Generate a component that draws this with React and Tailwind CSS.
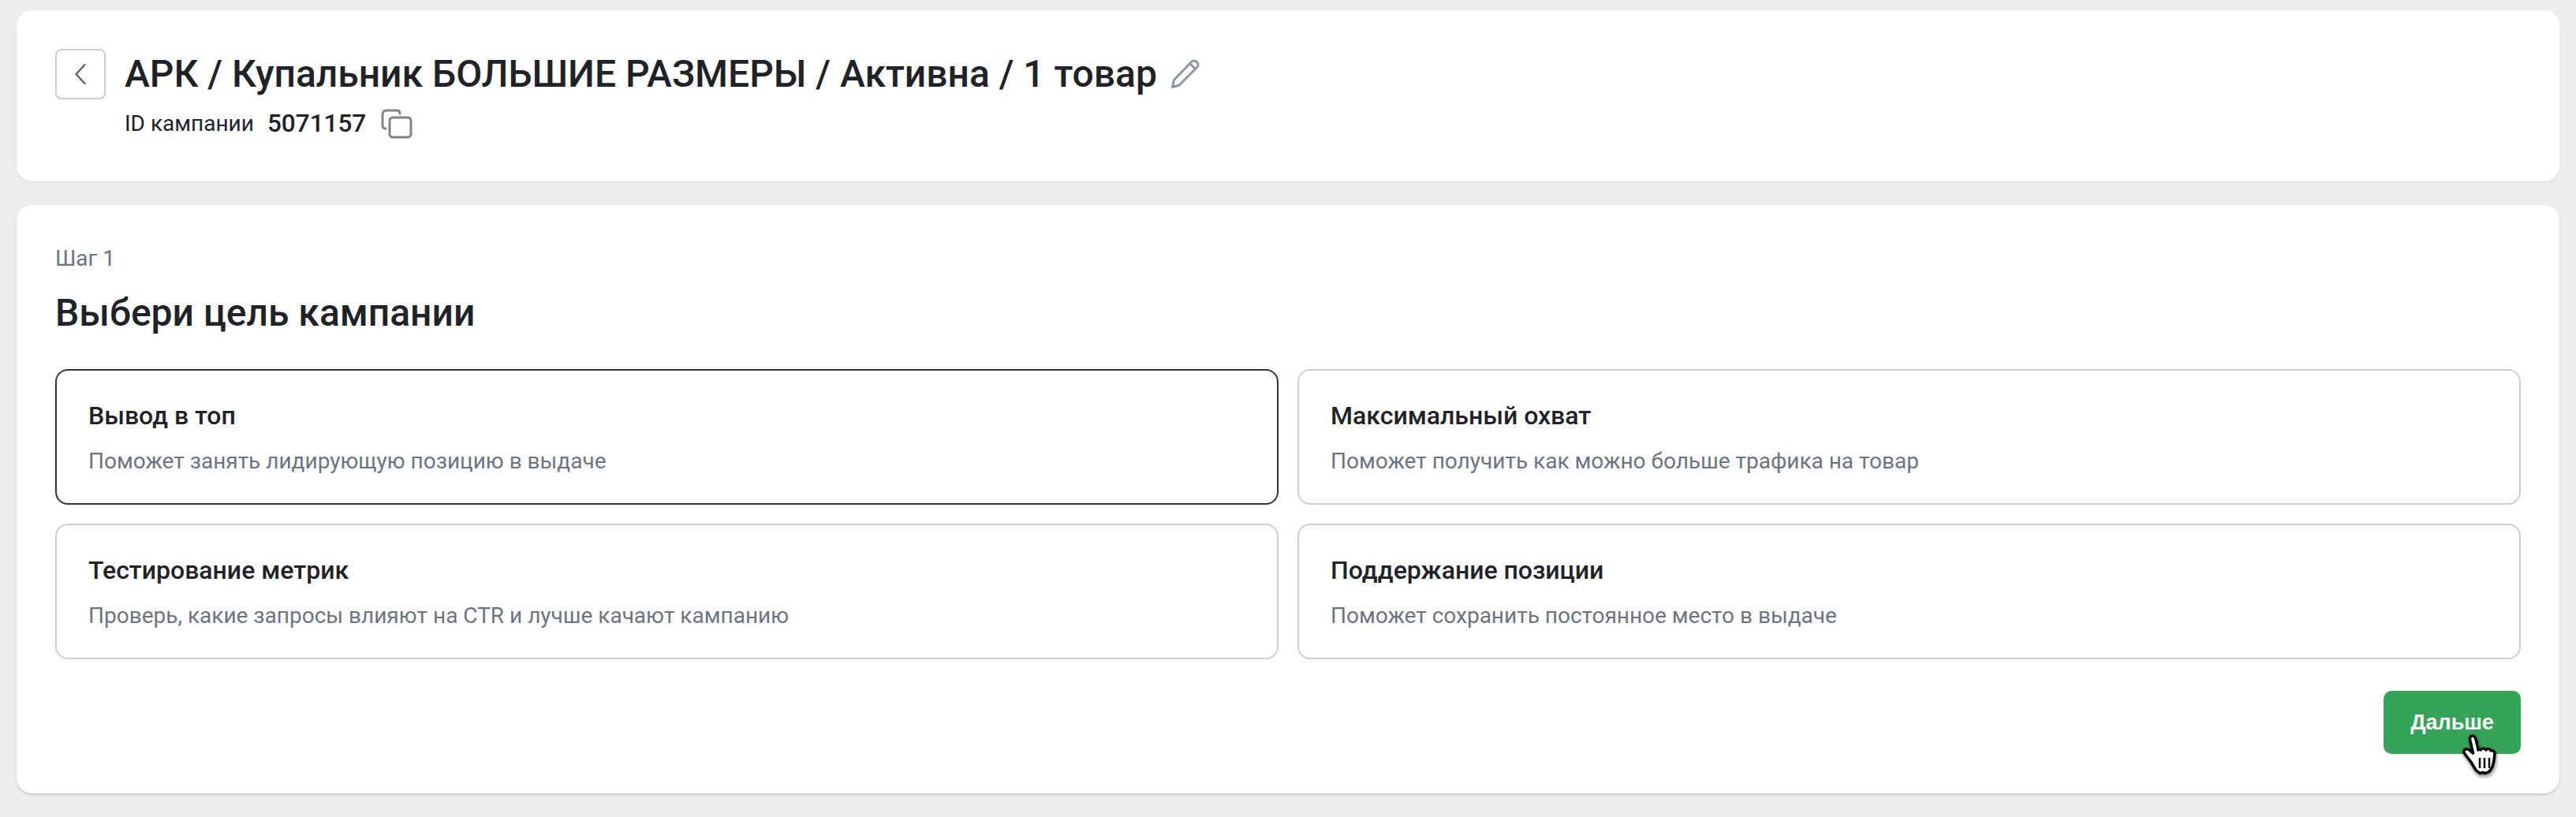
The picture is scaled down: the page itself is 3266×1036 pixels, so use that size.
import React from "react";

const goals = [
  { title: "Вывод в топ", text: "Поможет занять лидирующую позицию в выдаче", active: true },
  { title: "Максимальный охват", text: "Поможет получить как можно больше трафика на товар" },
  { title: "Тестирование метрик", text: "Проверь, какие запросы влияют на CTR и лучше качают кампанию" },
  { title: "Поддержание позиции", text: "Поможет сохранить постоянное место в выдаче" },
];

const HandCursor = () => (
  <svg className="absolute left-[100px] top-[54px] w-[50px] h-[54px] drop-shadow-[1px_3px_2px_rgba(0,0,0,0.45)]" viewBox="0 0 50 54" fill="none">
    <path
      d="M13 3c-2.500 0-4 2-3.500 5l4 17-2-1.500c-3-3-6.500-4.500-8.500-3-2 1.500-1.500 3.500 0 5.500l8 10.500 6 10 5 4 4-1 3 1 5-2 4-6 2-8 1-9c0-3-3-4.500-5-3.500-1-3-4.500-3-6-1-2-3-6-2-7 0-1-1-2-1-3 0l-2.500-12c-1-4-2.500-6-4.500-6z"
      fill="#fff"
      stroke="#000"
      strokeWidth="3.500"
      strokeLinejoin="round"
    />
    <path d="M22 31v13M28 31v13M34 31v13" stroke="#000" strokeWidth="2.500" />
  </svg>
);

const GoalCard = ({ title, text, active }) => (
  <button
    className={`flex flex-col items-start h-[172px] pl-[40px] pt-[39px] border-2 rounded-[16px] bg-white text-left ${
      active ? "border-[#32353b]" : "border-[#cbced3]"
    }`}
  >
    <span className="text-[32px] leading-[36px] font-medium text-[#1f2226]">{title}</span>
    <span className="mt-[22px] text-[28px] leading-[36px] text-[#6c7480]">{text}</span>
  </button>
);

const App = () => {
  return (
    <div className="min-h-[1036px] bg-[#ededed] pt-[13px] px-[21px] font-['Roboto',sans-serif]">
      {/* Header Card */}
      <section className="h-[217px] bg-white rounded-[20px] pt-[49px] px-[49px] shadow-[0_1px_2px_rgba(0,0,0,0.08)]">
        <div className="flex items-center">
          <button className="flex items-center justify-center w-[64px] h-[64px] border-2 border-[#cbced3] rounded-[8px]">
            <svg className="w-[32px] h-[32px]" viewBox="0 0 32 32" fill="none">
              <path d="M21.500 4 10.500 16l11 12" stroke="#5c6470" strokeWidth="2.500" strokeLinecap="round" strokeLinejoin="round" />
            </svg>
          </button>
          <h1 className="ml-[24px] text-[48px] leading-[64px] font-medium text-[#1f2226]">
            АРК / Купальник БОЛЬШИЕ РАЗМЕРЫ / Активна / 1 товар
          </h1>
          <svg className="ml-[17px] w-[38px] h-[38px]" viewBox="0 0 38 38" fill="none">
            <path
              d="M2.500 35.500l2-9L26.500 3.500c2-2 5-2 7 0s2 5 0 7L11 33z M25 6l7 7"
              stroke="#8f96a0"
              strokeWidth="3"
              strokeLinejoin="round"
            />
          </svg>
        </div>
        <div className="flex items-center mt-[11px] ml-[88px]">
          <span className="text-[28px] leading-[40px] text-[#1f2226]">ID кампании</span>
          <span className="ml-[17px] text-[31.500px] leading-[40px] font-medium text-[#1f2226]">5071157</span>
          <svg className="ml-[19px] w-[40px] h-[38px]" viewBox="0 0 40 38" fill="none">
            <rect x="11" y="11" width="27" height="25" rx="4" stroke="#7c838d" strokeWidth="3" />
            <path d="M6 25c-2 0-4-1-4-4V7c0-3 2-5 5-5h13c2 0 4 1 4 4" stroke="#7c838d" strokeWidth="3" strokeLinecap="round" />
          </svg>
        </div>
      </section>

      {/* Step Card */}
      <section className="mt-[30px] h-[746px] bg-white rounded-[20px] pt-[48px] px-[49px] shadow-[0_2px_3px_rgba(0,0,0,0.15)]">
        <p className="text-[28px] leading-[40px] text-[#6c7480]">Шаг 1</p>
        <h2 className="mt-[19px] text-[48px] leading-[60px] font-medium text-[#1f2226]">Выбери цель кампании</h2>
        <div className="grid grid-cols-2 gap-x-[24px] gap-y-[24px] mt-[41px]">
          {goals.map((goal) => (
            <GoalCard key={goal.title} {...goal} />
          ))}
        </div>
        <div className="flex justify-end mt-[40px]">
          <button className="relative w-[174px] h-[80px] rounded-[10px] bg-[#34a558] text-white text-[27px] font-bold font-['Liberation_Sans',sans-serif]">
            Дальше
            <HandCursor />
          </button>
        </div>
      </section>
    </div>
  );
};

export default App;
